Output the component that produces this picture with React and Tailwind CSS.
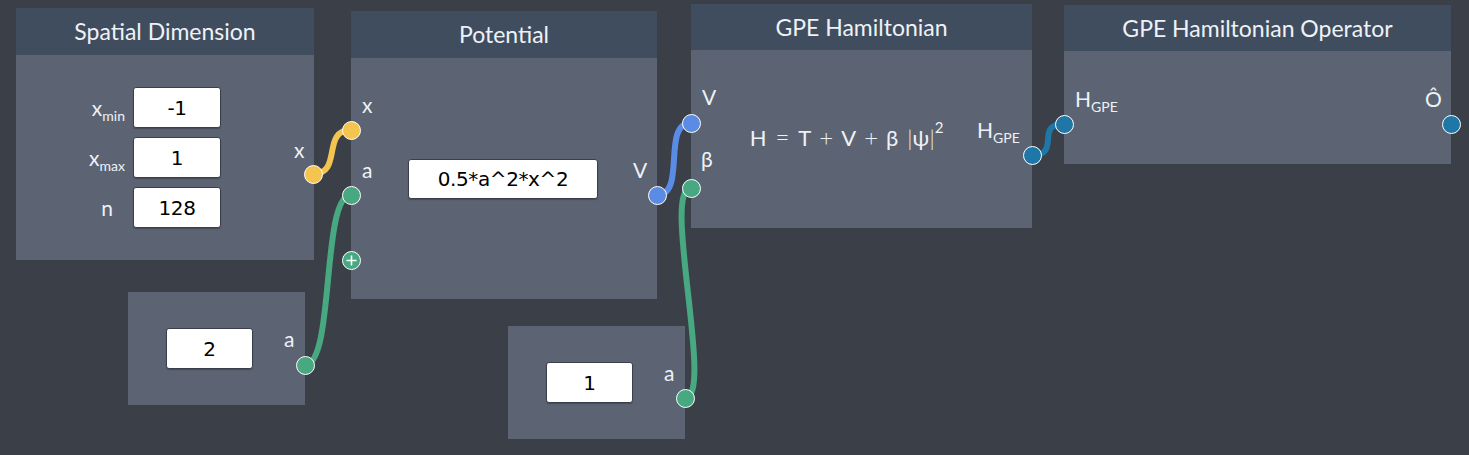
import React from "react";

const FONT = { fontFamily: "Lato, 'Open Sans', sans-serif" };
const INPUT_FONT = { fontFamily: "'DejaVu Sans', sans-serif" };

function Field({ value, className = "" }) {
  return (
    <div
      style={INPUT_FONT}
      className={`flex items-center justify-center bg-white border border-[#3a3f4a] rounded-[3px] text-[20px] tracking-[-0.4px] text-black shadow-[0_1px_1px_rgba(0,0,0,0.25)] ${className}`}
    >
      {value}
    </div>
  );
}

function Node({ title, left, top, w, h, headerH = 47, children }) {
  return (
    <div
      className="absolute flex flex-col bg-[#5c6473]"
      style={{ left, top, width: w, height: h }}
    >
      {title && (
        <div
          className="flex items-center justify-center bg-[#404d5e] text-[#eef2f7] text-[23px] shrink-0"
          style={{ height: headerH }}
        >
          {title}
        </div>
      )}
      <div className="relative flex-1">{children}</div>
    </div>
  );
}

function Label({ left, top, children }) {
  return (
    <span
      className="absolute text-[21px] leading-none text-[#eef2f7] whitespace-nowrap"
      style={{ left, top }}
    >
      {children}
    </span>
  );
}

function Sub({ children }) {
  return (
    <span className="relative top-[5px] text-[14px]">{children}</span>
  );
}

function Port({ x, y, color, plus }) {
  return (
    <div
      className="absolute z-20 w-[19px] h-[19px] rounded-full border-[1.5px] border-white flex items-center justify-center"
      style={{ left: x - 9.5, top: y - 9.5, backgroundColor: color }}
    >
      {plus && (
        <svg width="13" height="13" viewBox="0 0 13 13">
          <path d="M6.5 1.5V11.5M1.5 6.5H11.5" stroke="white" strokeWidth="1.6" />
        </svg>
      )}
    </div>
  );
}

const YELLOW = "#f4c450";
const GREEN = "#47a882";
const BLUE = "#5a8ce6";
const DBLUE = "#1f77a8";

export default function App() {
  return (
    <div
      style={FONT}
      className="relative w-[1469px] h-[455px] overflow-hidden bg-[#3b3f48]"
    >
      {/* Spatial Dimension */}
      <Node title="Spatial Dimension" left={16} top={8} w={298} h={252}>
        <div className="flex flex-col gap-[9px] pt-[32px] pl-[62px]">
          <div className="flex items-center gap-[8px]">
            <span className="w-[47px] text-right text-[21px] text-[#eef2f7] leading-none">
              x<Sub>min</Sub>
            </span>
            <Field value="-1" className="w-[88px] h-[41px]" />
          </div>
          <div className="flex items-center gap-[8px]">
            <span className="w-[47px] text-right text-[21px] text-[#eef2f7] leading-none">
              x<Sub>max</Sub>
            </span>
            <Field value="1" className="w-[88px] h-[41px]" />
          </div>
          <div className="flex items-center gap-[8px]">
            <span className="w-[47px] text-right text-[21px] text-[#eef2f7] leading-none pr-[12px]">
              n
            </span>
            <Field value="128" className="w-[88px] h-[41px]" />
          </div>
        </div>
        <Label left={278} top={84}>x</Label>
      </Node>

      {/* Potential */}
      <Node title="Potential" left={351} top={11} w={306} h={288}>
        <div className="flex h-full items-center justify-center pr-[2px]">
          <Field value="0.5*a^2*x^2" className="w-[190px] h-[40px]" />
        </div>
        <Label left={11} top={36}>x</Label>
        <Label left={11} top={101}>a</Label>
        <Label left={282} top={101}>V</Label>
      </Node>

      {/* GPE Hamiltonian */}
      <Node title="GPE Hamiltonian" left={691} top={4} w={341} h={224} headerH={46}>
        <div className="flex h-full items-center justify-center pr-[30px] pb-[4px] text-[22px] text-[#eef2f7] whitespace-nowrap">
          <span>H</span>
          <span className="mx-[9px] text-[24px] font-light">=</span>
          <span>T</span>
          <span className="mx-[8px] text-[24px] font-light">+</span>
          <span>V</span>
          <span className="mx-[8px] text-[24px] font-light">+</span>
          <span>β</span>
          <span className="ml-[9px] font-light">|</span>
          <span>ψ</span>
          <span className="font-light">|</span>
          <span className="relative -top-[10px] text-[15px]">2</span>
        </div>
        <Label left={11} top={36}>V</Label>
        <Label left={10} top={98}>β</Label>
        <Label left={286} top={69}>
          H<Sub>GPE</Sub>
        </Label>
      </Node>

      {/* GPE Hamiltonian Operator */}
      <Node title="GPE Hamiltonian Operator" left={1064} top={5} w={387} h={159} headerH={46}>
        <Label left={11} top={37}>
          H<Sub>GPE</Sub>
        </Label>
        <Label left={361} top={37}>Ô</Label>
      </Node>

      {/* Constant 2 */}
      <Node left={128} top={292} w={177} h={113}>
        <div className="flex h-full items-center justify-center pr-[14px]">
          <Field value="2" className="w-[87px] h-[41px]" />
        </div>
        <Label left={156} top={36}>a</Label>
      </Node>

      {/* Constant 1 */}
      <Node left={508} top={326} w={177} h={113}>
        <div className="flex h-full items-center justify-center pr-[14px]">
          <Field value="1" className="w-[87px] h-[41px]" />
        </div>
        <Label left={156} top={36}>a</Label>
      </Node>

      {/* Edges */}
      <svg
        className="absolute inset-0 z-10 pointer-events-none"
        width="1469"
        height="455"
        fill="none"
        strokeWidth="6"
        strokeLinecap="round"
      >
        <path d="M313 174 C343 174 321 130 351 130" stroke={YELLOW} />
        <path d="M305 365 C335 365 321 195 351 195" stroke={GREEN} />
        <path d="M657 195 C687 195 661 123 691 123" stroke={BLUE} />
        <path d="M685 398 C715 398 661 188 691 188" stroke={GREEN} />
        <path d="M1032 155 C1062 155 1034 124 1064 124" stroke={DBLUE} />
      </svg>

      {/* Ports */}
      <Port x={313} y={174} color={YELLOW} />
      <Port x={351} y={130} color={YELLOW} />
      <Port x={351} y={195} color={GREEN} />
      <Port x={351} y={260} color={GREEN} plus />
      <Port x={305} y={365} color={GREEN} />
      <Port x={657} y={195} color={BLUE} />
      <Port x={691} y={123} color={BLUE} />
      <Port x={691} y={188} color={GREEN} />
      <Port x={685} y={398} color={GREEN} />
      <Port x={1032} y={155} color={DBLUE} />
      <Port x={1064} y={124} color={DBLUE} />
      <Port x={1451} y={124} color={DBLUE} />
    </div>
  );
}
